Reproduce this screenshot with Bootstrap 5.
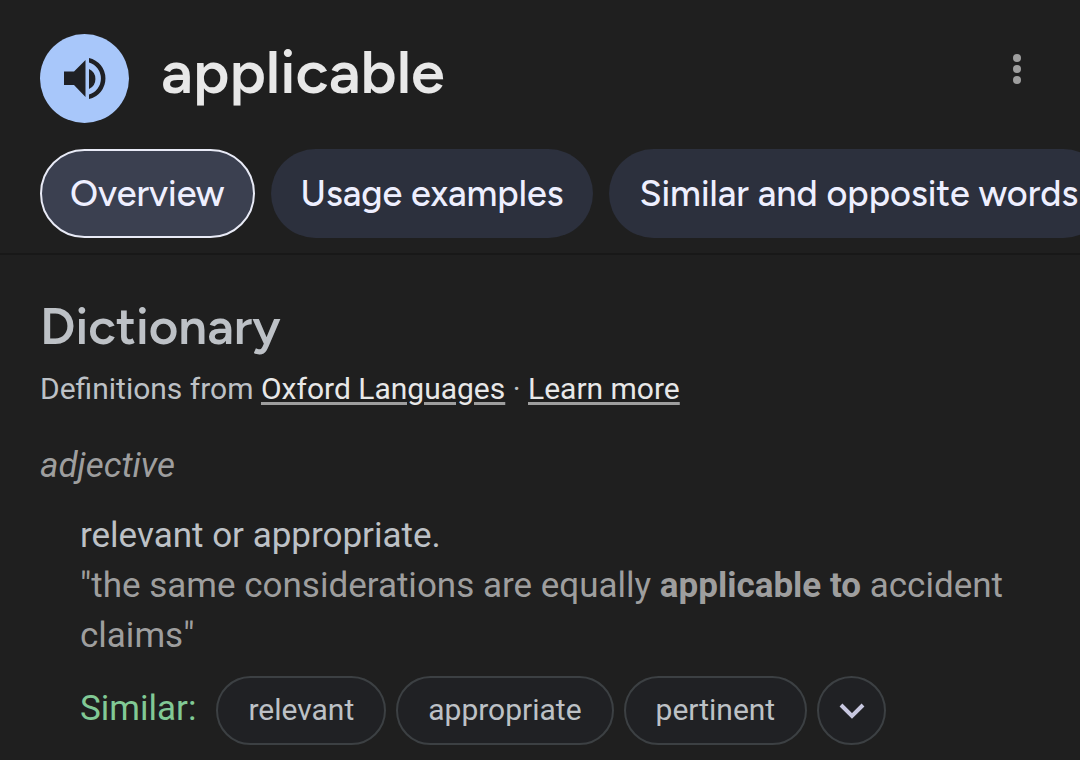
<!DOCTYPE html>
<html lang="en" data-bs-theme="dark">
<head>
<meta charset="utf-8">
<meta name="viewport" content="width=device-width, initial-scale=1">
<title>applicable – Dictionary</title>
<link href="https://cdn.jsdelivr.net/npm/bootstrap@5.3.0/dist/css/bootstrap.min.css" rel="stylesheet">
<style>
body{background:#1f1f1f;color:#bdc1c6;font-family:Roboto,sans-serif;overflow-x:hidden}
.gsans{font-family:"Google Sans",Figtree,Lato,sans-serif}
.page-head{padding:34px 40px 15px;border-bottom:2px solid #181818}
.speak{width:89px;height:89px;background:#a8c7fa;color:#1f2024}
.speak:hover{background:#a8c7fa}
.word{font-size:61px;line-height:76px;color:#e8e8e8;font-weight:600}
.overflow-btn{width:48px;height:70px;margin-right:-1px;color:#9e9e9e}
.tabs{gap:16px;margin-top:26px;margin-right:-40px;overflow:hidden}
.tab{height:89px;padding:0 28px;border:2px solid transparent;border-radius:45px;background:#2c303d;color:#eeefff;font-size:36px;line-height:48px;font-weight:500;white-space:nowrap}
.tab.active{background:#3b4050;border-color:#e8eaf6}
.entry{padding:42px 40px 16px}
h2{font-size:51px;line-height:60px;color:#bdc1c6;font-weight:600}
.source{font-size:30px;line-height:40px}
.source a{color:#e8e8e8;text-decoration-color:#9e9e9e;text-decoration-thickness:3px;text-underline-offset:3px}
.pos{font-size:35px;line-height:50px;color:#9e9e9e}
.sense{font-size:35px;line-height:50px;padding-left:40px}
.quote{color:#9e9e9e;margin-bottom:15px}
.similar-row{gap:10px}
.similar{color:#81c995;margin-right:10px;padding-bottom:4px}
.chip{height:69px;padding:0 30px 2px;border:2px solid #3c4043;border-radius:35px;background:#202124;color:#bdc1c6;font-size:30px;line-height:40px}
.chip-more{width:69px;padding:0;color:#c8c8e0}
</style>
</head>
<body>
<header class="page-head">
  <div class="d-flex align-items-start">
    <button type="button" class="speak btn border-0 p-0 rounded-circle d-flex align-items-center justify-content-center flex-shrink-0" aria-label="Listen">
      <svg width="44" height="44" viewBox="0 0 44 44" fill="currentColor" aria-hidden="true">
        <path d="M1 14.500h10L22.500 3v37L11 28H1zM26 12a11 11 0 0 1 0 20zM26 1a21 21 0 0 1 0 41v-4.500a16.700 16.700 0 0 0 0-32z"/>
      </svg>
    </button>
    <h1 class="word gsans mb-0 ms-4 ps-2 flex-grow-1">applicable</h1>
    <button type="button" class="overflow-btn btn border-0 p-0" aria-label="More options">
      <svg width="10" height="32" viewBox="0 0 10 32" fill="currentColor" aria-hidden="true"><circle cx="5" cy="5" r="4"/><circle cx="5" cy="16" r="4"/><circle cx="5" cy="27" r="4"/></svg>
    </button>
  </div>
  <nav class="tabs d-flex gsans" aria-label="Sections">
    <button type="button" class="tab active flex-shrink-0">Overview</button>
    <button type="button" class="tab flex-shrink-0">Usage examples</button>
    <button type="button" class="tab flex-shrink-0">Similar and opposite words</button>
  </nav>
</header>
<main class="entry">
  <h2 class="gsans mb-2 pb-1">Dictionary</h2>
  <p class="source mb-4 pb-1">Definitions from <a href="#">Oxford Languages</a> · <a href="#">Learn more</a></p>
  <p class="pos fst-italic pt-1 mb-3">adjective</p>
  <div class="sense">
    <p class="mb-0 pt-1">relevant or appropriate.</p>
    <p class="quote">"the same considerations are equally <b>applicable to</b> accident claims"</p>
    <div class="similar-row d-flex flex-wrap align-items-center">
      <span class="similar">Similar:</span>
      <button type="button" class="chip">relevant</button>
      <button type="button" class="chip">appropriate</button>
      <button type="button" class="chip">pertinent</button>
      <button type="button" class="chip chip-more d-flex align-items-center justify-content-center" aria-label="Show more">
        <svg width="26" height="18" viewBox="0 0 26 18" fill="none" stroke="currentColor" stroke-width="4" aria-hidden="true"><path d="M2 3l11 11L24 3"/></svg>
      </button>
    </div>
  </div>
</main>
<script src="https://cdn.jsdelivr.net/npm/bootstrap@5.3.0/dist/js/bootstrap.bundle.min.js"></script>
</body>
</html>
